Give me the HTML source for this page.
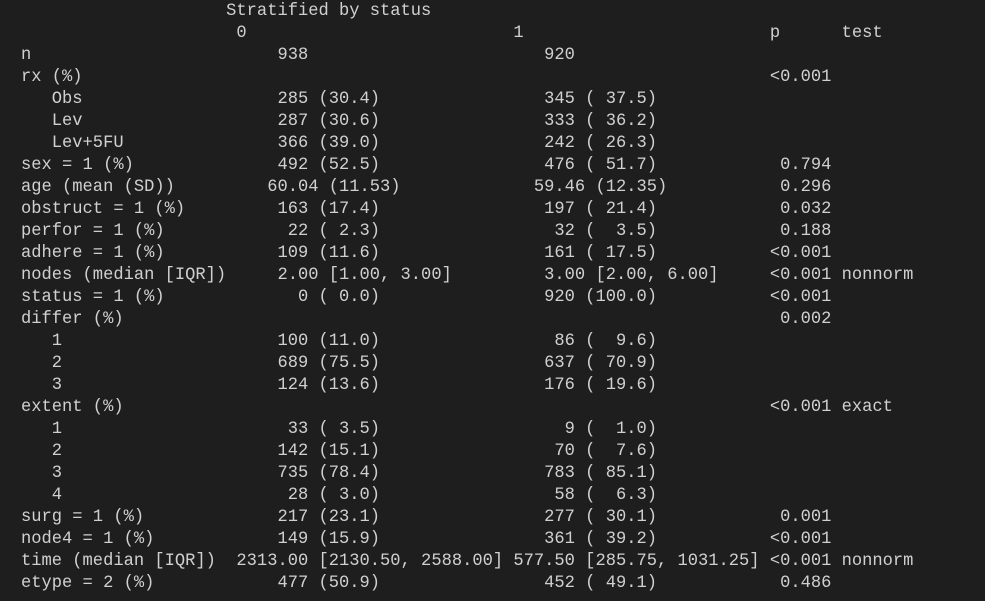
<!DOCTYPE html>
<html><head><meta charset="utf-8"><style>
html,body{margin:0;padding:0;background:#1e1e1e;width:985px;height:601px;overflow:hidden}
pre{position:absolute;left:21px;top:1px;margin:0;font-family:"Liberation Mono",monospace;font-size:17.1px;line-height:22px;color:#d0d0d0}
</style></head><body>
<pre>                    Stratified by status
                     0                          1                        p      test
n                        938                       920
rx (%)                                                                   &lt;0.001
   Obs                   285 (30.4)                345 ( 37.5)
   Lev                   287 (30.6)                333 ( 36.2)
   Lev+5FU               366 (39.0)                242 ( 26.3)
sex = 1 (%)              492 (52.5)                476 ( 51.7)            0.794
age (mean (SD))         60.04 (11.53)             59.46 (12.35)           0.296
obstruct = 1 (%)         163 (17.4)                197 ( 21.4)            0.032
perfor = 1 (%)            22 ( 2.3)                 32 (  3.5)            0.188
adhere = 1 (%)           109 (11.6)                161 ( 17.5)           &lt;0.001
nodes (median [IQR])     2.00 [1.00, 3.00]         3.00 [2.00, 6.00]     &lt;0.001 nonnorm
status = 1 (%)             0 ( 0.0)                920 (100.0)           &lt;0.001
differ (%)                                                                0.002
   1                     100 (11.0)                 86 (  9.6)
   2                     689 (75.5)                637 ( 70.9)
   3                     124 (13.6)                176 ( 19.6)
extent (%)                                                               &lt;0.001 exact
   1                      33 ( 3.5)                  9 (  1.0)
   2                     142 (15.1)                 70 (  7.6)
   3                     735 (78.4)                783 ( 85.1)
   4                      28 ( 3.0)                 58 (  6.3)
surg = 1 (%)             217 (23.1)                277 ( 30.1)            0.001
node4 = 1 (%)            149 (15.9)                361 ( 39.2)           &lt;0.001
time (median [IQR])  2313.00 [2130.50, 2588.00] 577.50 [285.75, 1031.25] &lt;0.001 nonnorm
etype = 2 (%)            477 (50.9)                452 ( 49.1)            0.486</pre>
</body></html>
